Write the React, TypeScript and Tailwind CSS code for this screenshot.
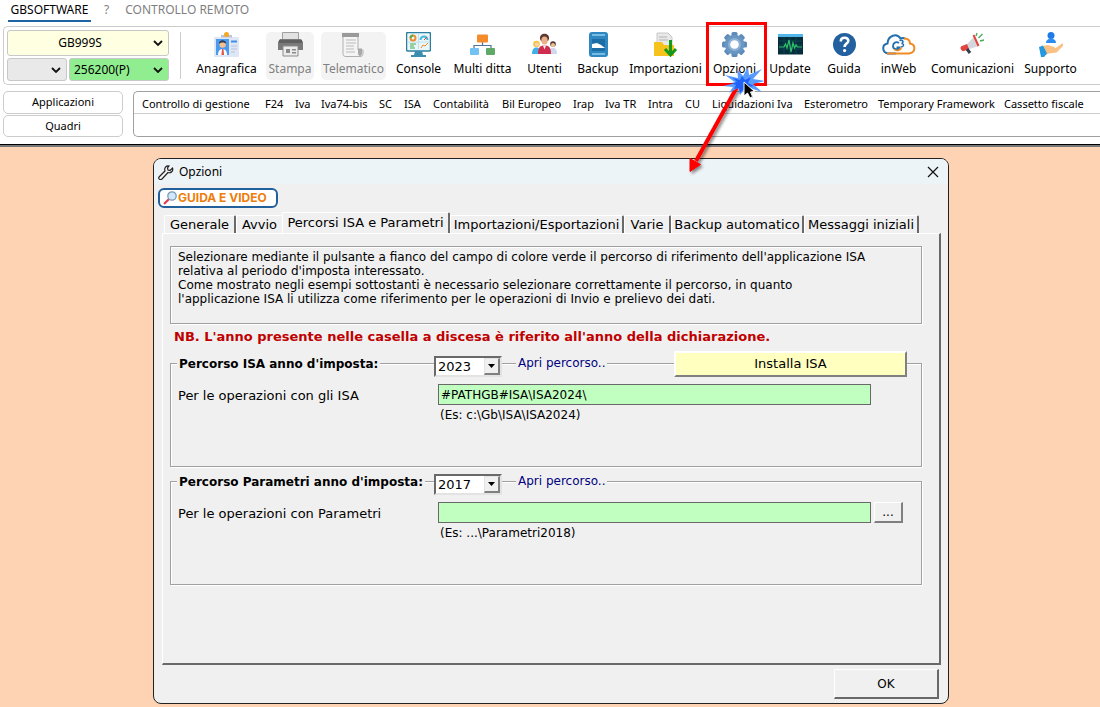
import React from "react";

type IconName =
  | "card" | "printer" | "scroll" | "monitor" | "tree" | "users" | "backup"
  | "import" | "gear" | "update" | "help" | "cloud" | "megaphone" | "hand";

function Icon({ name }: { name: IconName }) {
  const art: Record<IconName, React.ReactNode> = {
    card: (
      <>
        <rect x="0" y="5" width="25" height="20" rx="1" fill="#dfe6f5" />
        <rect x="2" y="7" width="13" height="16" fill="#4a9af0" />
        <path d="M4 23c0-4 2-6 4.500-6s4.500 2 4.500 6z" fill="#fff" />
        <path d="M8 17h1.500l.6 6h-2.700z" fill="#e2574c" />
        <circle cx="8.600" cy="12.500" r="3.200" fill="#f7c08a" />
        <path d="M5 12c-.5-5 7.500-5 7.200 0-1.500-2-5.500-2-7.200 0z" fill="#333b52" />
        <path d="M17 9.500h6" stroke="#3f8fe8" strokeWidth="2" />
        <path d="M17 14h6M17 17h6M17 20h4" stroke="#b7c4de" strokeWidth="1" />
        <path d="M7 3h11v2.500H7z" fill="#b9c2d6" />
        <circle cx="12.500" cy="2.500" r="2.500" fill="#f5a623" />
      </>
    ),
    printer: (
      <>
        <path d="M4.500 .5h16v8h-16z" fill="#e2e2e2" stroke="#a0a0a0" />
        <path d="M2 7h21l2 3v8H0v-8z" fill="#7a7a7a" />
        <path d="M1 8h23v3H1z" fill="#606060" />
        <path d="M5 14h15v10H5z" fill="#ececec" stroke="#8c8c8c" />
        <path d="M8 17h4v4H8zM14 17h4v1.500h-4zM14 20h4v1.500h-4z" fill="#8a8a8a" />
      </>
    ),
    scroll: (
      <>
        <path d="M2 4h15v14h5v3c0 3-1.500 3.500-3 3.500H5c-2 0-3-1-3-3z" fill="#f4f4f4" stroke="#b0b0b0" />
        <path d="M1 1h17v4H1z" fill="#9a9a9a" />
        <path d="M5 8h10M5 11h10M5 14h8M5 17h8M5 20h9" stroke="#bbb" />
        <path d="M17 16.500h4v4.500c0 4-4 4-4 0z" fill="#a8a8a8" />
      </>
    ),
    monitor: (
      <>
        <rect x=".5" y=".5" width="24" height="18.500" rx="1.500" fill="#e9f7fb" stroke="#2e7f9f" strokeWidth="1.500" />
        <path d="M12.500 2v15M2 10h21" stroke="#bfe0ea" />
        <circle cx="7" cy="6" r="2.500" fill="none" stroke="#ef8b2c" strokeWidth="2" />
        <path d="M4.500 6A2.500 2.500 0 0 1 7 3.500" fill="none" stroke="#4bb04f" strokeWidth="2" />
        <path d="M14.500 8a3.500 3.500 0 0 1 7 0" fill="none" stroke="#45b7dd" strokeWidth="2" />
        <path d="M18 8l3-3" stroke="#e14b3c" />
        <path d="M4 12h6M4 14h4M4 16h5" stroke="#49a851" />
        <path d="M15 16l2-3 2 1 3-3" fill="none" stroke="#ef8b2c" />
        <path d="M9 19h7l1 4h3v2H5v-2h3z" fill="#3c8eae" />
      </>
    ),
    tree: (
      <>
        <path d="M12.500 10v4M4 17v-3.500h17V17" fill="none" stroke="#50749a" strokeWidth="1.200" />
        <rect x="7" y="2.500" width="11" height="8" rx="1" fill="#f58b2a" />
        <rect x="0" y="16" width="9" height="7" rx="1" fill="#72c2f3" />
        <rect x="16" y="16" width="9" height="7" rx="1" fill="#5fa866" />
      </>
    ),
    users: (
      <>
        <circle cx="4.500" cy="12" r="3.300" fill="#f5c542" />
        <circle cx="4.800" cy="12.500" r="2" fill="#fbd3a8" />
        <path d="M0 22c0-5 2-6.500 4.500-6.500S9 18 9 22z" fill="#3fb0e8" />
        <circle cx="21" cy="12" r="2.800" fill="#4b342e" />
        <circle cx="21" cy="13" r="2" fill="#f4c096" />
        <path d="M17 22c0-5 1.500-6 4-6s4 1.500 4 6z" fill="#cfd9ee" />
        <path d="M8 7c-1-7 10-7 9 0l-1 2H9z" fill="#5b3a34" />
        <ellipse cx="12.500" cy="8.500" rx="3.200" ry="4" fill="#eab08a" />
        <path d="M6 22c0-6 1.500-8.500 6.500-8.500S19 16 19 22z" fill="#d02c4d" />
        <path d="M11 13.500h3l-1.500 4z" fill="#fff" />
      </>
    ),
    backup: (
      <>
        <rect x="3" y="0" width="19" height="25" rx="3" fill="#2f87c1" />
        <path d="M6 3h13M6 22h13" stroke="#8fd0f2" strokeWidth="1.500" />
        <rect x="6" y="7" width="13" height="12" rx="1" fill="#1c6ca5" />
        <path d="M6 16v-4l5-1 4 2 4 3z" fill="#fff" />
      </>
    ),
    import: (
      <>
        <path d="M4 1h11l4 4v13H4z" fill="#e8e8e8" stroke="#c8c8c8" />
        <path d="M6 5h8M6 8h9" stroke="#b4b4b4" />
        <path d="M1 10h8l2 3h10v11H1z" fill="#f6c21c" />
        <path d="M17.500 8v14M12 17l5.500 6 5.500-6" fill="none" stroke="#13991b" strokeWidth="3" />
      </>
    ),
    gear: (
      <>
        {[0, 45, 90, 135].map((a) => (
          <rect key={a} x="9.500" y="0" width="6" height="25" rx="1.500" fill="#5e8cba" transform={`rotate(${a} 12.500 12.500)`} />
        ))}
        <circle cx="12.500" cy="12.500" r="9.800" fill="#6a96c2" />
        <circle cx="12.500" cy="12.500" r="6.500" fill="#8eb2d5" />
        <circle cx="12.500" cy="12.500" r="4.300" fill="#fff" />
      </>
    ),
    update: (
      <>
        <rect x="0" y="2" width="25" height="20.500" fill="#062d3c" />
        <path d="M0 2h25v3H0z" fill="#53b6ea" />
        <path d="M1 9h23M1 13h23M1 17h23M6 5v17M12 5v17M18 5v17" stroke="#0d4450" />
        <path d="M1 15h5l1.500-3 1.500 4 2-8 2 12 2-9 1.500 5 1.500-3 1.500 2H24" fill="none" stroke="#2fc46a" strokeWidth="1.200" />
      </>
    ),
    help: (
      <>
        <circle cx="12.500" cy="12.500" r="11.500" fill="#23609f" />
        <path d="M8.800 9.500c0-5 7.800-4.700 7.500-.5-.2 2.700-3.700 2.600-3.700 6" fill="none" stroke="#fff" strokeWidth="2.600" />
        <circle cx="12.600" cy="18.600" r="1.600" fill="#fff" />
      </>
    ),
    cloud: (
      <>
        <path d="M14 21.500H6c-6-1-6.500-9-.5-10C6 3 15 1 18.500 6.500c1.500-.8 3-.8 4.500 0" fill="none" stroke="#2470ae" strokeWidth="2" />
        <path d="M5 21.500h22c7-1 7-9 1-10 0-4-2.500-5-6-5" fill="none" stroke="#f28a22" strokeWidth="2" />
        <path d="M17 11c-3-2-6 0-6 3 0 3.500 5 4.500 6.500 1.500h-3" fill="none" stroke="#2470ae" strokeWidth="1.800" />
        <path d="M17.500 8.500c4-1 4.500 2 2 3 3 0 2.500 3.500-.5 3.500" fill="none" stroke="#2470ae" strokeWidth="1.500" />
        <path d="M12 17.500c3 2 7 .5 7.500-2" fill="none" stroke="#f28a22" strokeWidth="1.500" />
      </>
    ),
    megaphone: (
      <>
        <path d="M5 14l10-10 4 10-13 4z" fill="#d4d8dd" />
        <path d="M2 14l5-2 2 5-5 2c-3 1-5-4-2-5z" fill="#e2463f" />
        <path d="M13.500 3l5 11" stroke="#e2463f" strokeWidth="2" />
        <path d="M7 17l3 4" stroke="#333e4b" strokeWidth="3" />
        <path d="M16 4l1-3M18.500 6l4-4M20 9l4-1" stroke="#46ab55" strokeWidth="1.300" />
      </>
    ),
    hand: (
      <>
        <circle cx="13" cy="3.500" r="3.500" fill="#1f7be5" />
        <path d="M8 11c0-6 10-6 10 0z" fill="#2c8cf2" />
        <path d="M5 14l5-1 6 2c2 1 1 2.500-1 2.500l5-3 4-3c2 0 1.500 2 .5 3l-6 6-8 1-4 2z" fill="#f9c183" />
        <path d="M1 15l4-1.500 4 8L6 25H3z" fill="#2299e0" />
      </>
    ),
  };
  return (
    <svg viewBox={name === "cloud" ? "0 0 34 25" : "0 0 25 25"} className={name === "cloud" ? "h-[25px] w-[34px]" : "h-[25px] w-[25px]"} aria-hidden="true">
      {art[name]}
    </svg>
  );
}

const tools: { label: string; icon: IconName; width: string; off?: boolean }[] = [
  { label: "Anagrafica", icon: "card", width: "w-[65px]" },
  { label: "Stampa", icon: "printer", width: "w-12", off: true },
  { label: "Telematico", icon: "scroll", width: "w-[65px]", off: true },
  { label: "Console", icon: "monitor", width: "w-[51px]" },
  { label: "Multi ditta", icon: "tree", width: "w-[63px]" },
  { label: "Utenti", icon: "users", width: "w-[47px]" },
  { label: "Backup", icon: "backup", width: "w-[46px]" },
  { label: "Importazioni", icon: "import", width: "w-[75px]" },
  { label: "Opzioni", icon: "gear", width: "w-[49px]" },
  { label: "Update", icon: "update", width: "w-12" },
  { label: "Guida", icon: "help", width: "w-[46px]" },
  { label: "inWeb", icon: "cloud", width: "w-[49px]" },
  { label: "Comunicazioni", icon: "megaphone", width: "w-[85px]" },
  { label: "Supporto", icon: "hand", width: "w-[57px]" },
];

const modules: [string, string][] = [
  ["Controllo di gestione", "w-[111px]"],
  ["F24", "w-[18px]"],
  ["Iva", "w-[14px]"],
  ["Iva74-bis", "w-[46px]"],
  ["SC", "w-[13px]"],
  ["ISA", "w-[17px]"],
  ["Contabilità", "w-[57px]"],
  ["Bil Europeo", "w-[59px]"],
  ["Irap", "w-[20px]"],
  ["Iva TR", "w-[31px]"],
  ["Intra", "w-[25px]"],
  ["CU", "w-[15px]"],
  ["Liquidazioni Iva", "w-[80px]"],
  ["Esterometro", "w-[62px]"],
  ["Temporary Framework", "w-[114px]"],
  ["Cassetto fiscale", "w-[80px]"],
];

const tabs: [string, string][] = [
  ["Generale", "w-[72px] h-[18px] border-r-2"],
  ["Avvio", "w-[46px] h-[18px]"],
  ["Percorsi ISA e Parametri", "w-[168px] h-[21px] border-r-2"],
  ["Importazioni/Esportazioni", "w-[174px] h-[18px] border-r-2"],
  ["Varie", "w-[47px] h-[18px] border-r-2"],
  ["Backup automatico", "w-[133px] h-[18px] border-r-2"],
  ["Messaggi iniziali", "w-[115px] h-[18px] border-r-2"],
];

function Chevron() {
  return (
    <svg viewBox="0 0 10 6" className="pointer-events-none mr-[5px] h-[6px] w-[10px] self-center justify-self-end [grid-area:1/1]" aria-hidden="true">
      <path d="M1 1l4 4 4-4" fill="none" stroke="#111" strokeWidth="1.800" />
    </svg>
  );
}

function Combo({ label, value, look }: { label: string; value: string; look: string }) {
  return (
    <div className={`grid rounded-[3px] border border-[#c8c8c8] ${look}`}>
      <select aria-label={label} defaultValue={value} className="w-full appearance-none bg-transparent pl-1 pr-5 text-[12px] leading-4 [grid-area:1/1] [text-align-last:inherit]">
        <option>{value}</option>
      </select>
      <Chevron />
    </div>
  );
}

function Pointer() {
  return (
    <svg viewBox="680 20 100 160" className="pointer-events-none absolute -left-[30px] -top-[12px] z-10 h-[160px] w-[100px] max-w-none" aria-hidden="true">
      <defs>
        <filter id="soft" x="-30%" y="-30%" width="160%" height="160%">
          <feDropShadow dx="2" dy="2" stdDeviation="1.500" floodOpacity=".45" />
        </filter>
      </defs>
      <rect x="707.500" y="23.500" width="58" height="61" fill="none" stroke="#fe0000" strokeWidth="3" />
      <g filter="url(#soft)">
        <path d="M737 87L696 161" stroke="#fe0000" strokeWidth="4" />
        <path d="M690 171.500V158.500L700.500 164.500z" fill="#fe0000" stroke="#fe0000" strokeLinejoin="round" />
      </g>
      <path d="M723 86l13-3-11-8 13 3-1-9 6 7 5-9 1 8 13-6-9 10 12 2-12 3 9 8-12-4 3 10-9-8-4 5-2-7-9 5 4-6z" fill="#5a9bff" />
      <path d="M731 83l6-1-4-4 7 2 2-4 3 4 6-3-3 6 6 3-6 1 2 6-6-4-4 4-1-5-5 1 2-4z" fill="#1f62f5" />
      <path d="M744 82v14l3.500-3 2.500 5 2.500-1.500-2-4.500 4-.5z" fill="#000" stroke="#fff" />
    </svg>
  );
}

function PathGroup(props: {
  id: string; title: string; year: string; label: string; path: string; hint: string; action?: string; browse?: boolean;
}) {
  const { id, title, year, label, path, hint, action, browse } = props;
  return (
    <section className="h-[104px] border border-[#a0a0a0] pl-[6px] shadow-[1px_1px_0_#fff,inset_1px_1px_0_#fff]">
      <div className="-mt-[13px] flex h-[27px] items-start">
        <div className="flex w-[257px] shrink-0">
          <h2 className="bg-[#f0f0f0] px-[2px] pt-[5px] text-[12px] font-bold leading-4">{title}</h2>
        </div>
        <div className="mt-[5px] grid h-[21px] w-[68px] shrink-0 border-2 border-b-[#e3e3e3] border-l-[#696969] border-r-[#e3e3e3] border-t-[#696969] bg-white">
          <select id={`${id}-year`} aria-label={title} defaultValue={year} className="appearance-none pl-[2px] text-[13px] leading-4 [grid-area:1/1]">
            <option>{year}</option>
          </select>
          <span className="pointer-events-none flex w-4 items-center justify-center justify-self-end border border-b-2 border-r-2 border-[#e3e3e3] border-b-[#808080] border-r-[#808080] bg-[#f0f0f0] [grid-area:1/1]">
            <svg viewBox="0 0 7 4" className="h-[4px] w-[7px]" aria-hidden="true"><path d="M0 0h7L3.500 4z" /></svg>
          </span>
        </div>
        <a href="#percorso" className="ml-[14px] bg-[#f0f0f0] px-[2px] pt-[4px] text-[12px] leading-4 text-[#000080]">Apri percorso..</a>
        {action && (
          <button className="ml-auto mr-[14px] h-[26px] w-[233px] border-2 border-b-[#808080] border-l-white border-r-[#808080] border-t-white bg-[#ffffc0] text-[13px]">{action}</button>
        )}
      </div>
      <div className="mt-[6px] grid grid-cols-[260px_1fr_50px] items-start pl-px">
        <label htmlFor={id} className="pt-[4px] text-[13px] leading-4">{label}</label>
        <input id={id} defaultValue={path} className="h-[21px] min-w-0 border border-[#696969] bg-[#c0ffc0] px-[2px] text-[12px]" />
        {browse && (
          <button aria-label="Sfoglia" className="ml-[3px] h-[21px] w-[29px] border border-b-2 border-r-2 border-white border-b-[#808080] border-r-[#808080] text-[12px] leading-4">...</button>
        )}
        <p className="col-start-2 px-[2px] pt-[2px] text-[12px] leading-4">{hint}</p>
      </div>
    </section>
  );
}

export default function App() {
  return (
    <div className="min-h-screen overflow-hidden bg-[#fdd3b3] font-['Noto_Sans','Open_Sans',sans-serif] text-black">
      <header className="h-[147px] border-b-2 border-[#777] bg-white">
        <div className="flex h-full flex-col border-b border-black">
          <nav className="flex h-[26px] shrink-0 items-start pl-2 text-[12px] leading-5 text-[#808080]">
            <a href="#gb" className="h-[22px] w-[83px] border-b-2 border-[#1f65a3] text-center text-black">GBSOFTWARE</a>
            <a href="#help" className="ml-[13px]">?</a>
            <a href="#remote" className="ml-[16px]">CONTROLLO REMOTO</a>
          </nav>
          <div className="ml-[3px] flex h-[59px] shrink-0 rounded-l-[5px] border border-r-0 border-[#ccc] pl-[3px]">
            <div className="mt-[3px] flex w-[162px] shrink-0 flex-col gap-[2px]">
              <Combo label="Ditta" value="GB999S" look="h-[26px] bg-[#ffffe1] [text-align-last:center]" />
              <div className="flex gap-[2px]">
                <Combo label="Anno" value="" look="h-[23px] w-[60px] bg-[#e9e9e9]" />
                <Combo label="Codice" value="256200(P)" look="h-[23px] flex-1 bg-[#90ee90]" />
              </div>
            </div>
            <div className="ml-[11px] mt-[5px] h-[47px] w-px shrink-0 bg-[#ccc]" />
            <div className="ml-[13px] mt-[5px] flex gap-[7px]">
              {tools.map((t) => (
                <button
                  key={t.label}
                  disabled={t.off}
                  className={`relative flex h-[48px] shrink-0 flex-col items-center gap-[4px] whitespace-nowrap rounded-[5px] text-[12px] leading-4 ${t.width} ${t.off ? "bg-[#f3f3f3] text-[#808080]" : ""}`}
                >
                  <Icon name={t.icon} />
                  <span>{t.label}</span>
                  {t.icon === "gear" && <Pointer />}
                </button>
              ))}
            </div>
          </div>
          <div className="mt-[6px] flex h-[46px] shrink-0 pl-[3px] text-[11px]">
            <div className="flex w-[120px] shrink-0 flex-col gap-px">
              <button className="flex-1 rounded-[5px] border border-[#ccc]">Applicazioni</button>
              <button className="flex-1 rounded-[5px] border border-[#ccc]">Quadri</button>
            </div>
            <div className="ml-[10px] flex-1 rounded-l-[5px] border border-r-0 border-[#a0a0a0]">
              <nav className="flex h-[22px] items-center gap-x-[12px] border-b border-[#ccc] pl-2 pt-[4px]">
                {modules.map(([name, width]) => (
                  <a key={name} href="#modulo" className={`shrink-0 whitespace-nowrap ${width}`}>{name}</a>
                ))}
              </nav>
            </div>
          </div>
        </div>
      </header>

      <main className="pb-[3px] pl-[18px] pr-4 pt-[11px]">
        <div role="dialog" aria-label="Opzioni" className="mx-auto max-w-[796px] overflow-hidden rounded-[8px] border border-[#222] bg-[#f0f0f0] font-['DejaVu_Sans',Verdana,sans-serif]">
          <div className="flex h-[25px] items-center bg-[#edf4f7] pl-[4px] pr-[9px] font-['Noto_Sans','Open_Sans',sans-serif] text-[12px]">
            <svg viewBox="0 0 16 16" className="h-4 w-4" aria-hidden="true">
              <path d="M1 13l6-6c-1-3 1-5.500 4-5L9.500 4l.5 2 2 .5L14.500 4c1 3-1.500 5.500-4.500 4.500L4 15c-2 1.500-4-.5-3-2z" fill="#f5f5f5" stroke="#222" strokeWidth="1.200" />
            </svg>
            <h1 className="ml-[5px]">Opzioni</h1>
            <button aria-label="Chiudi" className="ml-auto">
              <svg viewBox="0 0 12 12" className="h-3 w-3"><path d="M1 1l10 10M11 1L1 11" stroke="#111" strokeWidth="1.200" /></svg>
            </button>
          </div>
          <button className="ml-[4px] mt-[4px] flex h-5 w-[120px] items-center whitespace-nowrap rounded-[6px] border-2 border-[#22609c] bg-white pl-[3px] font-['Inter',sans-serif] text-[12px] font-bold leading-4 text-[#ee7d0b]">
            <svg viewBox="0 0 14 14" className="h-[14px] w-[14px] shrink-0" aria-hidden="true">
              <path d="M1 13l5-5" stroke="#e23b4e" strokeWidth="2.200" />
              <circle cx="9" cy="5" r="4.200" fill="#cfe8fa" stroke="#7e9ab3" strokeWidth="1.300" />
            </svg>
            <span className="ml-[1px]">GUIDA E VIDEO</span>
          </button>
          <div role="tablist" className="ml-[10px] mt-[4px] flex h-[21px] items-end text-[13px] leading-4">
            {tabs.map(([name, look]) => (
              <button key={name} role="tab" aria-selected={name.startsWith("Percorsi")} className={`shrink-0 whitespace-nowrap rounded-t-[2px] border-l border-t border-white border-r-[#696969] ${look}`}>
                {name}
              </button>
            ))}
          </div>
          <div role="tabpanel" className="ml-[8px] mr-[7px] h-[432px] border border-b-2 border-r-2 border-white border-b-[#696969] border-r-[#696969] pl-[7px] pr-[17px] pt-[12px]">
            <div className="h-[78px] border border-[#a0a0a0] pl-[7px] pt-[3px] text-[12px] leading-[14px] shadow-[1px_1px_0_#fff,inset_1px_1px_0_#fff]">
              <p>Selezionare mediante il pulsante a fianco del campo di colore verde il percorso di riferimento dell'applicazione ISA<br />relativa al periodo d'imposta interessato.</p>
              <p>Come mostrato negli esempi sottostanti è necessario selezionare correttamente il percorso, in quanto<br />l'applicazione ISA li utilizza come riferimento per le operazioni di Invio e prelievo dei dati.</p>
            </div>
            <p className="mb-[18px] mt-[5px] pl-[4px] text-[13px] font-bold leading-4 text-[#c00000]">NB. L'anno presente nelle casella a discesa è riferito all'anno della dichiarazione.</p>
            <div className="flex flex-col gap-[14px]">
              <PathGroup id="isa" title="Percorso ISA anno d'imposta:" year="2023" label="Per le operazioni con gli ISA" path="#PATHGB#ISA\ISA2024\" hint="(Es: c:\Gb\ISA\ISA2024)" action="Installa ISA" />
              <PathGroup id="parametri" title="Percorso Parametri anno d'imposta:" year="2017" label="Per le operazioni con Parametri" path="" hint="(Es: ...\Parametri2018)" browse />
            </div>
          </div>
          <div className="flex justify-end pb-[4px] pr-[9px] pt-[4px]">
            <button className="h-[30px] w-[105px] border border-b-2 border-r-2 border-white border-b-[#696969] border-r-[#696969] text-[12px]">OK</button>
          </div>
        </div>
      </main>
    </div>
  );
}
